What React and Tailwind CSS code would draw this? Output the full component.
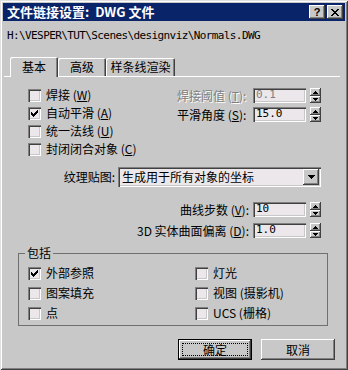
import React from 'react';

const sunken =
  'bg-[#ebe7eb] shadow-[inset_1px_1px_0_#808080,inset_2px_2px_0_#404040,inset_-1px_-1px_0_#fff,inset_-2px_-2px_0_#c8c8c8]';
const raised =
  'bg-[#c8c8c8] shadow-[inset_-1px_-1px_0_#404040,inset_1px_1px_0_#fff,inset_-2px_-2px_0_#808080]';

const CheckMark = () => (
  <svg width="7" height="7" viewBox="0 0 7 7" shapeRendering="crispEdges">
    <path
      d="M6 0h1v1h-1zM5 1h2v1h-2zM0 2h1v1h-1zM4 2h3v1h-3zM0 3h2v1h-2zM3 3h3v1h-3zM0 4h5v1h-5zM1 5h3v1h-3zM2 6h1v1h-1z"
      fill="#000"
    />
  </svg>
);

const Check = ({ checked, children }) => (
  <div className="flex items-center h-full gap-[5px]">
    <span className={`w-[13px] h-[13px] shrink-0 flex items-center justify-center ${sunken}`}>
      {checked && <CheckMark />}
    </span>
    <span className="text-[12px] leading-[14px]">{children}</span>
  </div>
);

const Spin = () => (
  <div className="flex flex-col w-[11px] h-[15px] ml-[4px]">
    <div className={`h-[8px] flex items-center justify-center ${raised}`}>
      <svg width="5" height="3" viewBox="0 0 5 3" shapeRendering="crispEdges">
        <path d="M2 0h1v1h1v1h1v1H0V2h1V1h1z" fill="#000" />
      </svg>
    </div>
    <div className={`h-[7px] flex items-center justify-center ${raised}`}>
      <svg width="5" height="3" viewBox="0 0 5 3" shapeRendering="crispEdges">
        <path d="M0 0h5v1H4v1H3v1H2V2H1V1H0z" fill="#000" />
      </svg>
    </div>
  </div>
);

const Field = ({ value, disabled }) => (
  <div
    className={`w-[53px] h-[15px] flex items-center pl-[3px] font-['DejaVu_Sans_Mono',monospace] text-[11px] ${sunken} ${
      disabled ? 'text-[#808080]' : 'text-black'
    }`}
  >
    {value}
  </div>
);

const Tab = ({ active, width, children }) => (
  <div
    className={
      active
        ? `${width} h-[20px] bg-[#c8c8c8] rounded-t-[2px] flex items-center justify-center text-[12px] shadow-[inset_1px_1px_0_#fff,inset_-1px_0_0_#404040,inset_-2px_0_0_#808080]`
        : `${width} h-[18px] mb-[1px] rounded-t-[2px] flex items-center justify-center text-[12px] shadow-[inset_1px_1px_0_#fff,inset_-1px_0_0_#404040,inset_-2px_0_0_#808080]`
    }
  >
    {children}
  </div>
);

export default function App() {
  return (
    <div className="w-[348px] h-[370px] p-[3px] flex flex-col bg-[#c8c8c8] text-black font-['Noto_Sans_CJK_SC',sans-serif] shadow-[inset_1px_1px_0_#e0e0e0,inset_-1px_-1px_0_#404040,inset_2px_2px_0_#fff,inset_-2px_-2px_0_#808080]">
      {/* title bar */}
      <div className="h-[18px] bg-[#0a246a] flex items-center justify-between pl-[4px] pr-[2px]">
        <span className="text-white font-bold text-[13px] leading-[16px] whitespace-pre">文件链接设置:  DWG 文件</span>
        <div className="flex gap-[2px]">
          <div className={`w-[16px] h-[14px] flex items-center justify-center font-['Liberation_Sans',sans-serif] font-bold text-[11px] leading-[12px] ${raised}`}>
            ?
          </div>
          <div className={`w-[16px] h-[14px] flex items-center justify-center ${raised}`}>
            <svg width="8" height="7" viewBox="0 0 8 7" shapeRendering="crispEdges">
              <path
                d="M0 0h2v1H0zM6 0h2v1H6zM1 1h2v1H1zM5 1h2v1H5zM2 2h4v1H2zM3 3h2v1H3zM2 4h4v1H2zM1 5h2v1H1zM5 5h2v1H5zM0 6h2v1H0zM6 6h2v1H6z"
                fill="#000"
              />
            </svg>
          </div>
        </div>
      </div>

      <div className="pl-[1px] flex flex-col">
        <div className="mt-[8px] pl-[3px] h-[14px] leading-[14px] font-['DejaVu_Sans_Mono',monospace] text-[11px] tracking-[-0.6px]">
          H:\VESPER\TUT\Scenes\designviz\Normals.DWG
        </div>

        {/* tabs */}
        <div className="mt-[14px] w-[336px] h-[20px] flex items-end pl-[6px] shadow-[inset_0_-1px_0_#fff]">
          <Tab active width="w-[48px]">基本</Tab>
          <Tab width="w-[48px]">高级</Tab>
          <Tab width="w-[69px]">样条线渲染</Tab>
        </div>

        <div className="mt-[9px] flex">
          <div className="w-[173px] pl-[24px] flex flex-col">
            <div className="h-[18px]"><Check>焊接 (<u>W</u>)</Check></div>
            <div className="h-[18px]"><Check checked>自动平滑 (<u>A</u>)</Check></div>
            <div className="h-[18px]"><Check>统一法线 (<u>U</u>)</Check></div>
            <div className="h-[18px]"><Check>封闭闭合对象 (<u>C</u>)</Check></div>
          </div>
          <div className="flex flex-col">
            <div className="h-[19px] flex items-center">
              <span className="w-[76px] text-[12px] leading-[14px] text-[#808080] [text-shadow:1px_1px_0_#fff]">焊接阈值 (<u>T</u>):</span>
              <Field value="0.1" disabled />
              <Spin />
            </div>
            <div className="h-[19px] flex items-center">
              <span className="w-[76px] text-[12px] leading-[14px]">平滑角度 (<u>S</u>):</span>
              <Field value="15.0" />
              <Spin />
            </div>
          </div>
        </div>

        <div className="mt-[9px] h-[20px] flex items-center">
          <span className="w-[114px] pr-[3px] text-right text-[12px] leading-[14px]">纹理贴图:</span>
          <div className={`w-[203px] h-[20px] flex items-center justify-between pl-[4px] pr-[2px] ${sunken}`}>
            <span className="text-[12px] leading-[14px]">生成用于所有对象的坐标</span>
            <div className={`w-[16px] h-[16px] flex items-center justify-center ${raised}`}>
              <svg width="7" height="4" viewBox="0 0 7 4" shapeRendering="crispEdges">
                <path d="M0 0h7v1H6v1H5v1H4v1H3V3H2V2H1V1H0z" fill="#000" />
              </svg>
            </div>
          </div>
        </div>

        <div className="mt-[12px] flex flex-col">
          <div className="h-[21px] flex items-center">
            <span className="w-[249px] pr-[4px] text-right text-[12px] leading-[14px]">曲线步数 (<u>V</u>):</span>
            <Field value="10" />
            <Spin />
          </div>
          <div className="h-[21px] flex items-center">
            <span className="w-[249px] pr-[4px] text-right text-[12px] leading-[14px]">3D 实体曲面偏离 (<u>D</u>):</span>
            <Field value="1.0" />
            <Spin />
          </div>
        </div>

        <fieldset className="mt-[6px] ml-[14px] w-[310px] border border-[#707070] pt-[4px] pb-[2px]">
          <legend className="ml-[6px] px-[2px] text-[12px] leading-[12px]">包括</legend>
          <div className="grid grid-cols-[176px_1fr]">
            <div className="h-[20px] pl-[9px]"><Check checked>外部参照</Check></div>
            <div className="h-[20px]"><Check>灯光</Check></div>
            <div className="h-[20px] pl-[9px]"><Check>图案填充</Check></div>
            <div className="h-[20px]"><Check>视图 (摄影机)</Check></div>
            <div className="h-[20px] pl-[9px]"><Check>点</Check></div>
            <div className="h-[20px]"><Check>UCS (栅格)</Check></div>
          </div>
        </fieldset>

        <div className="mt-[13px] ml-[174px] flex gap-[9px]">
          <button className="w-[74px] h-[21px] border border-black bg-[#c8c8c8] p-0">
            <div className={`w-full h-full p-[3px] ${raised}`}>
              <div className="w-full h-full border border-dotted border-black flex items-center justify-center text-[12px] leading-[12px]">
                确定
              </div>
            </div>
          </button>
          <button className={`w-[74px] h-[21px] flex items-center justify-center text-[12px] leading-[12px] ${raised}`}>
            取消
          </button>
        </div>
      </div>
    </div>
  );
}
